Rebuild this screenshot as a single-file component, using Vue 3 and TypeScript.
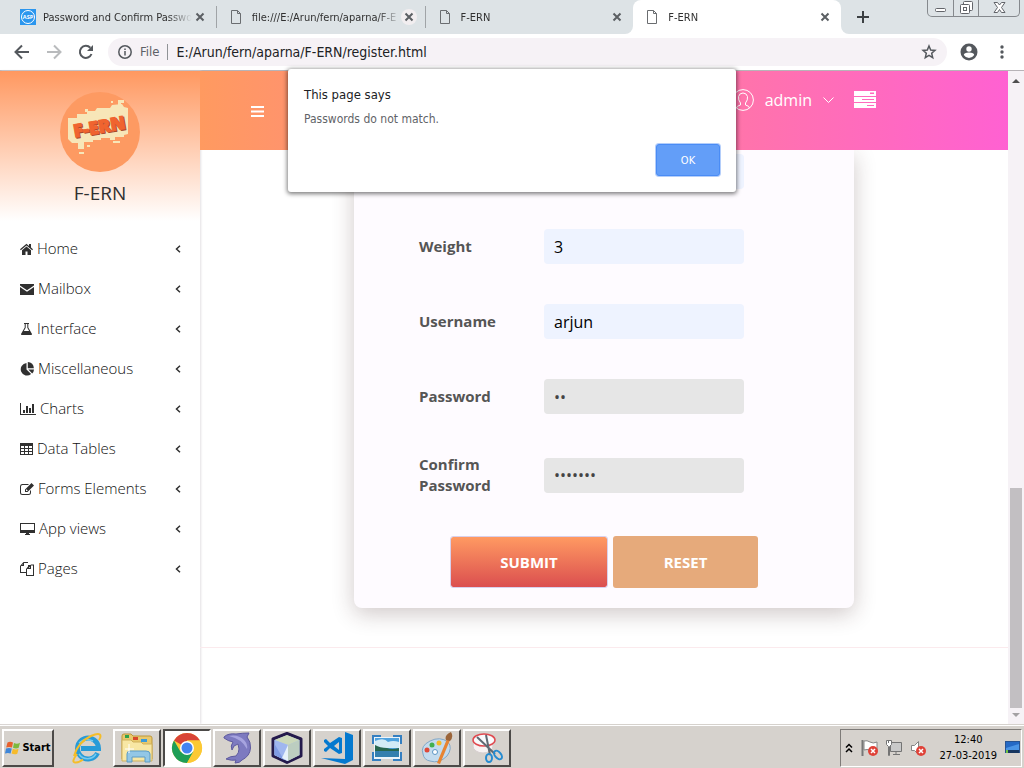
<script setup lang="ts">
import { ref } from 'vue'

interface Tab {
  title: string
  active?: boolean
  asp?: boolean
  hovered?: boolean
}

interface NavItem {
  label: string
  width: number
  path: string
}

const tabs: Tab[] = [
  { title: 'Password and Confirm Passwo', asp: true },
  { title: 'file:///E:/Arun/fern/aparna/F-E', hovered: true },
  { title: 'F-ERN' },
  { title: 'F-ERN', active: true },
]

// Every icon path is drawn on a grid 14 units high.
const nav: NavItem[] = [
  { label: 'Home', width: 13, path: 'M6.5 1.8 0 7.2l.8 1 5.7-4.8 5.7 4.8.8-1-2-1.700V2H9v1.900zM6.500 4.400 2 8.200V13h3.500V9.500h2V13H11V8.200z' },
  { label: 'Mailbox', width: 14, path: 'M0 2h14v1.500L7 8.300 0 3.500zM0 5l7 4.800L14 5v8H0z' },
  { label: 'Interface', width: 13, path: 'M4 1h5v1h-.700v3.500L12 12q.3 1-1 1H2q-1.300 0-1-1l3.700-6.500V2H4zM5.700 2v3.800L3.900 9h5.200L7.300 5.800V2z' },
  { label: 'Miscellaneous', width: 14, path: 'M6.500 1v6.500l4.600 4.600A6.300 6.300 0 1 1 6.500 1zM7.800 0A6 6 0 0 1 13.800 6.300H7.800zM8.300 7.500H14a6 6 0 0 1-1.800 4z' },
  { label: 'Charts', width: 16, path: 'M0 1h1v11h15v1H0zM3 8h2v3H3zM6 4h2v7H6zM9 6h2v5H9zM12 2h2v9h-2z' },
  { label: 'Data Tables', width: 13, path: 'M0 1h13v12H0zM1 4v2h3V4zM5 4v2h3V4zM9 4v2h3V4zM1 7v2h3V7zM5 7v2h3V7zM9 7v2h3V7zM1 10v2h3v-2zM5 10v2h3v-2zM9 10v2h3v-2z' },
  { label: 'Forms Elements', width: 14, path: 'M2 2h7L8 3H2.500Q1 3 1 4.500v6Q1 12 2.500 12h6q1.500 0 1.500-1.500V9l1-1v2.500Q11 13 8.500 13h-6Q0 13 0 10.500v-6Q0 2 2 2zM11.500 1 14 3.500 7.500 10H5V7.500zM6 7.900V9h1.100l.6-.6-1.100-1.100z' },
  { label: 'App views', width: 15, path: 'M0 1h15v10H9v1h1v1H5v-1h1v-1H0zM1 2v6h13V2z' },
  { label: 'Pages', width: 14, path: 'M3.500 0H8v3h2.500L11 2.500h3V14H6v-3H0V4zM7 1H4v3H1v6h5V7l2-2.500V1zM3 2.200 2.200 3H3zM13 3.500h-2V7H7v6h6zM10 4.800 8.800 6H10z' },
]

const height = ref('5')
const weight = ref('3')
const username = ref('arjun')
const password = ref('ab')
const confirmPassword = ref('abcdefg')
</script>

<template>
  <div class="desktop">
    <header class="tabstrip">
      <div class="tabs">
        <div v-for="(tab, i) in tabs" :key="i" class="tab" :class="{ active: tab.active }">
          <svg v-if="tab.asp" class="favicon" viewBox="0 0 16 16" width="16" height="16">
            <rect width="16" height="16" fill="#2b96ee" />
            <circle cx="8" cy="8" r="6.500" fill="none" stroke="#fff" />
            <text x="8" y="10" text-anchor="middle" font-size="5.500" font-weight="bold" fill="#fff">ASP</text>
          </svg>
          <svg v-else class="favicon" viewBox="0 0 16 16" width="16" height="16" fill="none" stroke="#6a6d70">
            <path d="M2.500 1.500h6l3 3v10h-9zM8.500 1.500v3h3" />
          </svg>
          <span class="tab-title">{{ tab.title }}</span>
          <button class="tab-close" :class="{ hovered: tab.hovered }" aria-label="Close tab">
            <svg viewBox="0 0 16 16" width="16" height="16" stroke="#5b5f63" stroke-width="2"><path d="M4.500 4.500l7 7M11.500 4.500l-7 7" /></svg>
          </button>
        </div>
      </div>
      <div class="strip-end">
        <button class="new-tab" aria-label="New tab">
          <svg viewBox="0 0 12 12" width="12" height="12" stroke="#3c4043" stroke-width="2"><path d="M6 0v12M0 6h12" /></svg>
        </button>
        <div class="window-controls">
          <button aria-label="Minimize"><svg width="13" height="14" viewBox="0 0 13 14" fill="#fff" stroke="#62656a"><rect x="1.500" y="8.500" width="10" height="3" rx="1" /></svg></button>
          <button aria-label="Restore"><svg width="13" height="14" viewBox="0 0 13 14" fill="#fff" stroke="#62656a"><rect x="3.500" y="1.500" width="9" height="9" rx="1" /><rect x=".5" y="4.500" width="9" height="9" rx="1" /><rect x="3.500" y="7.500" width="3" height="3" /></svg></button>
          <button class="wide" aria-label="Close"><svg width="13" height="14" viewBox="0 0 13 14" fill="#fff" stroke="#62656a"><path d="M1 2.500h3.500l2 2.500 2-2.500H12L8.500 7.500l3.500 5H8.500l-2-3-2 3H1l3.500-5z" /></svg></button>
        </div>
      </div>
    </header>

    <div class="toolbar">
      <button aria-label="Back"><svg width="16" height="16" viewBox="0 0 16 16" fill="none" stroke="#54585d" stroke-width="2"><path d="M15 8H2M8 1.500 1.500 8 8 14.500" /></svg></button>
      <button aria-label="Forward"><svg width="16" height="16" viewBox="0 0 16 16" fill="none" stroke="#b9bbbd" stroke-width="2"><path d="M1 8h13M8 1.500 14.500 8 8 14.500" /></svg></button>
      <button aria-label="Reload"><svg width="16" height="16" viewBox="0 0 16 16" fill="none" stroke="#54585d" stroke-width="2"><path d="M13.500 10A6 6 0 1 1 12.300 3.800" /><path d="M15 1v6H9z" fill="#54585d" stroke="none" /></svg></button>
      <div class="omnibox">
        <svg width="14" height="14" viewBox="0 0 14 14" fill="none" stroke="#54585d" stroke-width="1.500"><circle cx="7" cy="7" r="6.200" /><path d="M7 6v4.500M7 3.500V5" /></svg>
        <span class="scheme">File</span>
        <input class="url" aria-label="Address" value="E:/Arun/fern/aparna/F-ERN/register.html" />
        <button aria-label="Bookmark"><svg width="16" height="16" viewBox="0 0 16 16" fill="none" stroke="#54585d" stroke-width="1.500"><path d="M8 2l1.700 4 4.300.4-3.300 2.900 1 4.300L8 11.300l-3.700 2.300 1-4.300L2 6.400 6.300 6z" /></svg></button>
      </div>
      <button aria-label="Profile"><svg width="18" height="18" viewBox="0 0 18 18"><circle cx="9" cy="9" r="8.500" fill="#54585d" /><circle cx="9" cy="6" r="2.700" fill="#fff" /><path d="M3.800 12q0-2.500 5.200-2.500t5.200 2.500q-2 3-5.200 3t-5.200-3z" fill="#fff" /></svg></button>
      <button aria-label="Menu"><svg width="16" height="16" viewBox="0 0 16 16" fill="#54585d"><circle cx="8" cy="3" r="1.700" /><circle cx="8" cy="8" r="1.700" /><circle cx="8" cy="13" r="1.700" /></svg></button>
    </div>

    <div class="viewport">
      <aside class="sidebar">
        <div class="brand">
          <svg class="logo" viewBox="0 0 80 80" width="80" height="80">
            <circle cx="40" cy="40" r="40" fill="#fd9a62" />
            <path fill="#f7e6b8" d="M8 26h9v-4h10v-3h8l2-3h13l2-3 10-1 2 3 4 1v26l-4 1v2h-9v3h-5v-2h-9v2h-8v2H24v7h-6v-6h-6l-4-4z" />
            <path fill="#f7e6b8" d="M51 9h2v2h-2zM58 8h6v3h-3v3h-3zM25 17h3v3h-3zM27 53h3v2h-3zM19 60h5v2h-5zM53 49h7v2h-7z" />
            <g transform="rotate(-10 40 35)" font-family="Open Sans, sans-serif" font-size="18" font-weight="800">
              <text x="14" y="42" fill="#a8482a" stroke="#a8482a">F-ERN</text>
              <text x="13" y="41" fill="#f0642f" stroke="#f0642f">F-ERN</text>
            </g>
          </svg>
          <h1>F-ERN</h1>
        </div>
        <nav>
          <a v-for="item in nav" :key="item.label" href="#">
            <svg :width="item.width" height="14" :viewBox="`0 0 ${item.width} 14`"><path :d="item.path" fill="#303030" fill-rule="evenodd" /></svg>
            <span>{{ item.label }}</span>
            <svg class="chevron" width="6" height="8" viewBox="0 0 6 8" fill="none" stroke="#303030" stroke-width="1.500"><path d="M5 .7 1.500 4 5 7.300" /></svg>
          </a>
        </nav>
      </aside>

      <main>
        <div class="topbar">
          <button class="burger" aria-label="Toggle navigation">
            <svg width="13" height="11" viewBox="0 0 13 11" fill="#fff"><path d="M0 0h13v2H0zM0 4.500h13v2H0zM0 9h13v2H0z" /></svg>
          </button>
          <button class="account">
            <svg width="22" height="22" viewBox="0 0 22 22" fill="none" stroke="#fff"><circle cx="11" cy="11" r="10.400" /><path d="M4.500 19q0-2 4-3v-2Q6 11 6.500 7.500 7.500 4 11 4t4.500 3.500Q16 11 13.500 14v2q4 1 4 3" /></svg>
            <span>admin</span>
            <svg width="11" height="6" viewBox="0 0 11 6" fill="none" stroke="#fff"><path d="M.5.5l5 5 5-5" /></svg>
          </button>
          <button class="tasks" aria-label="Tasks">
            <svg width="22" height="17" viewBox="0 0 22 17" fill="#fff" fill-rule="evenodd"><path d="M0 0h22v5H0zM16 1.500v1.500h4V1.500zM0 6h22v5H0zM8 8v1h12V8zM0 12h22v5H0zM13 14v1h7v-1z" /></svg>
          </button>
        </div>

        <form class="card" @submit.prevent>
          <div class="row"><label for="height">Height</label><input id="height" v-model="height" class="filled" type="text" /></div>
          <div class="row"><label for="weight">Weight</label><input id="weight" v-model="weight" class="filled" type="text" /></div>
          <div class="row"><label for="username">Username</label><input id="username" v-model="username" class="filled" type="text" /></div>
          <div class="row"><label for="password">Password</label><input id="password" v-model="password" type="password" /></div>
          <div class="row"><label for="confirm">Confirm Password</label><input id="confirm" v-model="confirmPassword" type="password" /></div>
          <div class="actions">
            <button class="submit" type="submit">SUBMIT</button>
            <button class="reset" type="button">RESET</button>
          </div>
        </form>
        <footer></footer>
      </main>

      <div class="scrollbar">
        <svg width="8" height="4" viewBox="0 0 8 4"><path d="M4 0l4 4H0z" fill="#4f4f4f" /></svg>
        <div class="track"><div class="thumb"></div></div>
        <svg width="8" height="4" viewBox="0 0 8 4"><path d="M4 4l4-4H0z" fill="#a3a1a3" /></svg>
      </div>

      <div class="dialog" role="alertdialog" aria-labelledby="dialog-title" aria-describedby="dialog-text">
        <h2 id="dialog-title">This page says</h2>
        <p id="dialog-text">Passwords do not match.</p>
        <button>OK</button>
      </div>
    </div>

    <div class="taskbar">
      <button class="start">
        <svg width="16" height="16" viewBox="0 0 16 16">
          <path d="M2.500 2.500Q5 1 8 2.500L7 7.500Q4 6.500 1.200 7.500z" fill="#e8602c" />
          <path d="M9 3q3 1.500 6-.2l-1.300 5Q11 9 8 7.700z" fill="#7db93c" />
          <path d="M1 8.500q3-1 5.800 0l-1.200 5Q3 12.500 0 13.500z" fill="#3f86d8" />
          <path d="M7.800 8.800q3 1.200 5.800 0l-1.300 5q-3 1.200-5.700-.2z" fill="#f6bb2c" />
        </svg>
        Start
      </button>
      <button class="app plain" aria-label="Internet Explorer">
        <svg width="32" height="32" viewBox="0 0 32 32" fill="none">
          <path d="M26.500 21A10.500 10.500 0 1 1 27.500 16.500H10" stroke="#279bd8" stroke-width="5" />
          <path d="M25 22A10 10 0 0 1 8 22M8 11Q14 5 22 9" stroke="#74cbf0" stroke-width="1.500" />
          <path d="M6 22Q0 30 4 30.500q3 .5 8-3M3 24Q7 10 20 4q9-4 9.500 0 0 2-1.500 4" stroke="#f5bd28" stroke-width="2" />
        </svg>
      </button>
      <button class="app" aria-label="File Explorer">
        <svg width="32" height="32" viewBox="0 0 32 32">
          <path d="M1 4q0-2 2-2h7l2 2h17q2 0 2 2v21H1z" fill="#e9c96d" stroke="#bd973b" />
          <path d="M4 3h4v3H4z" fill="#2fa24b" /><path d="M12 5h5v3h-5z" fill="#d9472b" /><path d="M20 7h6v3h-6z" fill="#3a9bd9" />
          <path d="M1 8h9l2 2h8l2 2h9v17H1z" fill="#f8e7a4" stroke="#cfb15c" />
          <path d="M6 30V22q0-3 3-3h16q4 0 4 3v8h-5v-5H11v5z" fill="#93c7e6" stroke="#5c9cc5" />
          <path d="M8 12v9M4 17h9" stroke="#fff" />
        </svg>
      </button>
      <button class="app current" aria-label="Google Chrome">
        <svg width="32" height="32" viewBox="0 0 32 32">
          <circle cx="16" cy="16" r="15" fill="#fcc934" />
          <path d="M16 16 3 8.500A15 15 0 0 1 29 8.500H16z" fill="#d94437" />
          <path d="M3 8.500A15 15 0 0 0 16 31l6.500-11.500L16 16l-6.500 3.700z" fill="#1e9e57" />
          <path d="M16 8.500h13A15 15 0 0 1 16 31l6.500-11.500z" fill="#fcc934" />
          <circle cx="16" cy="16" r="7" fill="#fff" /><circle cx="16" cy="16" r="5.500" fill="#4384f2" />
        </svg>
      </button>
      <button class="app" aria-label="MySQL Workbench">
        <svg width="32" height="32" viewBox="0 0 32 32" stroke-linejoin="round">
          <path d="M3 5Q7 1 15 2q7-1 13-1l-2 4q4 5 3.500 11-.5 8-8.500 12-2 3-7 3l1-3q-4 1-10-1 4-3 10-3 3-3 3-7l-1-5-4 2-2 4q-2-4 1-8-5-1-9-4z" fill="#7d7ac0" stroke="#5e5a9e" />
          <path d="M8 4q9-2 15 4 4 4 3 9Q21 7 8 4z" fill="#a7a4df" />
        </svg>
      </button>
      <button class="app" aria-label="NetBeans">
        <svg width="32" height="32" viewBox="0 0 32 32" stroke-linejoin="round">
          <path d="M16 1.500 30 7v17L16 30.500 2 24V7z" fill="#b2c6ea" stroke="#241a4c" stroke-width="3" />
          <path d="M16 3 28.500 8 17 13 3.500 8z" fill="#cbd8ba" />
          <path d="M3.500 8 17 13v16L3.500 23z" fill="#9fb6ef" />
          <path d="M28.500 8 17 13v16l11.500-6z" fill="#bccdc0" />
          <path d="M3.500 12 13 28 3.500 23z" fill="#7f9be4" />
          <path d="M17 13v16l-6-3z" fill="#e6f1fa" />
        </svg>
      </button>
      <button class="app" aria-label="Visual Studio Code">
        <svg width="32" height="32" viewBox="0 0 32 32" fill="#0479cf">
          <path d="M24 0l8 3v25l-8 4-24-6 24 1z" />
          <path fill-rule="evenodd" d="M18 5l3 1v15l-3 1-9-6-4 4-2-1v-2l4-3-4-4v-2l2-1 4 4zM18 10l-5 4 5 4z" />
        </svg>
      </button>
      <button class="app" aria-label="Photo viewer">
        <svg width="32" height="32" viewBox="0 0 32 32">
          <path d="M1 3h9v3H4v6H1zM31 3h-9v3h6v6h3zM1 29h9v-3H4v-6H1zM31 29h-9v-3h6v-6h3z" fill="#357fc1" />
          <path d="M3 5h26v22H3z" fill="#edf4fa" /><path d="M4 6h24v19H4z" fill="#4fa2df" />
          <path d="M4 9q9-4 13 1 5-2 11 0v6H4z" fill="#d3ebf7" /><path d="M4 13q5 3 12 3 5 2 12 0v3H4z" fill="#27664f" /><path d="M4 19h24v6H4z" fill="#347fae" />
        </svg>
      </button>
      <button class="app" aria-label="Paint">
        <svg width="32" height="32" viewBox="0 0 32 32">
          <path d="M2 22Q-1 14 9 9t18 1q5 6-1 14-8 8-17 5-6-1-7-7z" fill="#c3dbee" stroke="#81a7c7" />
          <circle cx="6" cy="18" r="2.500" fill="#df4939" /><circle cx="11" cy="13" r="2.500" fill="#41af4d" /><circle cx="18" cy="11" r="2.500" fill="#f5bb28" /><circle cx="14" cy="20" r="2.500" fill="#fff" stroke="#5d97c5" />
          <path d="M26 7l3 1-10 24-3-1z" fill="#e78432" /><path d="M25 8q-2-5 5-8 3 5-1 9z" fill="#9b653a" />
        </svg>
      </button>
      <button class="app" aria-label="Snipping Tool">
        <svg width="32" height="32" viewBox="0 0 32 32" fill="none">
          <ellipse cx="12" cy="14" rx="10" ry="7" fill="#f7f2f2" stroke="#d7cfd0" />
          <ellipse cx="13" cy="8" rx="11" ry="6" fill="#f9fafc" stroke="#e04a50" stroke-width="1.500" />
          <path d="M6 5l18 17M15 3l4 20" stroke="#5f6972" stroke-width="2" />
          <ellipse cx="18" cy="26" rx="3" ry="4" stroke="#268bd0" stroke-width="2" /><ellipse cx="27" cy="23" rx="3" ry="5" stroke="#268bd0" stroke-width="2" transform="rotate(-40 27 23)" />
        </svg>
      </button>
      <div class="tray">
        <svg width="8" height="10" viewBox="0 0 8 10" fill="none" stroke="#000" stroke-width="1.500"><path d="M1 4.500l3-3 3 3M1 9l3-3 3 3" /></svg>
        <div class="tray-icons">
          <svg width="18" height="18" viewBox="0 0 18 18"><path d="M1.500 1v16" stroke="#777" stroke-width="2" /><path d="M3 2q3-1 6 1t7 0v8q-4 1-7 0t-6 0z" fill="#fff" stroke="#858585" /><circle cx="12" cy="12" r="5" fill="#df4238" /><path d="M10 10l4 4M14 10l-4 4" stroke="#fff" stroke-width="1.500" /></svg>
          <svg width="18" height="18" viewBox="0 0 18 18" fill="#fff" stroke="#747474"><path d="M5.500 3.500h11v9h-11z" fill="#c9c9c9" /><path d="M8 15.500h7M11 13v2" /><path d="M1.500 1.500h5v4l-2 2v9h-1v-9l-2-2z" /><path d="M3.500 1v3" /></svg>
          <svg width="18" height="18" viewBox="0 0 18 18"><path d="M2.500 6.500h3l4-4v13l-4-4h-3z" fill="#fff" stroke="#858585" /><circle cx="12" cy="12" r="5" fill="#df4238" /><path d="M10 10l4 4M14 10l-4 4" stroke="#fff" stroke-width="1.500" /></svg>
        </div>
        <div class="clock"><time>12:40</time><time>27-03-2019</time></div>
        <svg width="15" height="13" viewBox="0 0 15 13"><rect x=".5" y=".5" width="14" height="11" fill="#2569c5" stroke="#285391" /><path d="M1 7l13-4v6H1z" fill="#4b95e6" /><path d="M1 9h13v3H1z" fill="#17365f" /><path d="M1 9h2v3H1z" fill="#6fc344" /></svg>
      </div>
    </div>
  </div>
</template>

<style>
body {
  margin: 0;
}
</style>

<style scoped>
.desktop {
  display: flex;
  flex-direction: column;
  height: 100vh;
  overflow: hidden;
  background: #fff;
  font-family: "Open Sans", "Noto Sans", sans-serif;
  color: #303030;
}
.desktop * {
  box-sizing: border-box;
}
button {
  padding: 0;
  border: 0;
  background: none;
  font: inherit;
  color: inherit;
}
svg {
  display: block;
  flex: none;
}

/* Browser chrome */
.tabstrip {
  display: flex;
  flex: none;
  height: 34px;
  background: linear-gradient(#dde3e6 50%, #fff 50%);
  font-family: "DejaVu Sans Condensed", "DejaVu Sans", sans-serif;
  font-size: 11px;
}
.tabs {
  display: flex;
  width: 841px;
}
.tab {
  display: flex;
  flex: 1;
  align-items: center;
  min-width: 0;
  padding: 0 8px 0 12px;
  background: #dde3e6;
}
.tab:first-child {
  flex: 1 0 8px;
  padding-left: 20px;
}
.tab:first-child,
.tab:nth-child(2) {
  border-image: linear-gradient(transparent 7px, #a0a4a7 7px, #a0a4a7 27px, transparent 27px) 1;
  border-right: 1px solid;
}
.tab:nth-child(3) {
  border-radius: 0 0 8px 0;
}
.tab.active {
  border-radius: 8px 8px 0 0;
  background: #fff;
}
.favicon {
  margin-right: 7px;
  font-family: "Open Sans", sans-serif;
}
.tab-title {
  flex: 1;
  overflow: hidden;
  white-space: nowrap;
  mask-image: linear-gradient(to left, transparent, #000 24px);
}
.tab-close {
  width: 16px;
  height: 16px;
  border-radius: 8px;
}
.tab-close.hovered {
  background: #f2eef0;
}
.strip-end {
  display: flex;
  flex: 1;
  border-radius: 0 0 0 8px;
  background: #dde3e6;
}
.new-tab {
  padding: 0 16px;
}
.window-controls {
  display: flex;
  height: 17px;
  margin-left: auto;
  margin-right: 4px;
  border: 1px solid #85898d;
  border-top: 0;
  border-radius: 0 0 5px 5px;
}
.window-controls button {
  display: flex;
  justify-content: center;
  width: 25px;
}
.window-controls button + button {
  border-left: 1px solid #85898d;
}
.window-controls .wide {
  width: 41px;
}
.toolbar {
  display: flex;
  flex: none;
  align-items: center;
  gap: 16px;
  height: 37px;
  padding: 0 14px;
  border-bottom: 1px solid #b7b3b7;
  font-family: "DejaVu Sans Condensed", "DejaVu Sans", sans-serif;
  font-size: 14px;
}
.omnibox {
  display: flex;
  flex: 1;
  align-items: center;
  height: 28px;
  margin: 0 -3px 0 -2px;
  padding: 0 10px;
  border-radius: 14px;
  background: #f6f2f6;
}
.scheme {
  margin-left: 8px;
  padding-right: 8px;
  border-right: 1px solid #909396;
  color: #5c6066;
  font-size: 13px;
  line-height: 16px;
}
.url {
  flex: 1;
  padding: 0 8px;
  border: 0;
  background: none;
  font: inherit;
  color: #202124;
  outline: 0;
}

/* Page */
.viewport {
  display: flex;
  flex: 1;
  min-height: 0;
  position: relative;
}
.sidebar {
  flex: none;
  width: 200px;
  box-shadow: 1px 0 2px #e4e0e4;
}
.brand {
  display: flex;
  flex-direction: column;
  align-items: center;
  height: 150px;
  padding-top: 21px;
  background: linear-gradient(#ff9860, #fff);
}
h1 {
  margin: 6px 0 0;
  font-size: 19px;
  font-weight: 400;
  line-height: 30px;
}
nav {
  padding-top: 8px;
}
nav a {
  display: flex;
  align-items: center;
  gap: 4px;
  height: 40px;
  padding: 0 19px 0 20px;
  color: #111;
  font-size: 15px;
  font-weight: 300;
  line-height: 20px;
  text-decoration: none;
}
nav span {
  padding-bottom: 2px;
}
.chevron {
  margin-left: auto;
}
main {
  flex: 1;
  overflow: hidden;
}
.topbar {
  display: flex;
  align-items: flex-start;
  height: 79px;
  padding: 18px 132px 0 51px;
  position: relative;
  z-index: 1;
  background: linear-gradient(to right, #ff9a60, #ff74aa 66%, #ff61d2);
  color: #fff;
}
.burger {
  margin-top: 17px;
}
.account {
  display: flex;
  align-items: center;
  gap: 11px;
  margin-left: auto;
  font-size: 16px;
  line-height: 22px;
}
.tasks {
  margin: 2px 0 0 20px;
}
.card {
  width: 500px;
  margin: 0 auto;
  padding: 4px 65px 20px;
  border-radius: 0 0 8px 8px;
  background: #fefbff;
  box-shadow: 0 6px 22px rgba(60, 30, 30, 0.24);
}
.row {
  display: flex;
  align-items: center;
  margin-bottom: 40px;
}
.row label {
  width: 125px;
  padding-right: 20px;
  color: #555;
  font-size: 15px;
  font-weight: 700;
  line-height: 21px;
}
.row input {
  width: 200px;
  height: 35px;
  padding: 0 10px;
  border: 0;
  border-radius: 4px;
  background: #e6e6e6;
  font-family: inherit;
  font-size: 16px;
  color: #444;
}
.row input.filled {
  background: #eef3ff;
  color: #000;
}
.actions {
  display: flex;
  justify-content: center;
  gap: 5px;
}
.actions button {
  height: 52px;
  border-radius: 3px;
  color: #fff;
  font-size: 15px;
  font-weight: 700;
}
.actions .submit {
  width: 158px;
  border: 1px solid #d8d0ec;
  background: linear-gradient(#ff9a62, #db4f4f) padding-box;
}
.actions .reset {
  width: 145px;
  background: #e6aa7b;
}
footer {
  margin-top: 39px;
  border-top: 1px solid #fbeaed;
}
.scrollbar {
  display: flex;
  flex: none;
  flex-direction: column;
  align-items: center;
  width: 16px;
  padding: 8px 0 7px;
  background: #f6f2f6;
}
.track {
  display: flex;
  flex: 1;
  align-items: flex-end;
  width: 12px;
}
.thumb {
  width: 12px;
  height: 35%;
  margin-bottom: 5px;
  background: #c2bfc2;
}
.dialog {
  display: flex;
  flex-direction: column;
  width: 448px;
  padding: 16px;
  position: absolute;
  top: -2px;
  left: calc(50% - 224px);
  z-index: 2;
  border-radius: 3px;
  background: #fff;
  box-shadow: 0 1px 4px 1px rgba(0, 0, 0, 0.5);
  font-family: "DejaVu Sans Condensed", "DejaVu Sans", sans-serif;
}
.dialog h2 {
  margin: 0;
  color: #202124;
  font-size: 13px;
  font-weight: 400;
  line-height: 20px;
}
.dialog p {
  margin: 4px 0 15px;
  color: #5f6368;
  font-size: 12px;
  line-height: 20px;
}
.dialog button {
  align-self: flex-end;
  width: 64px;
  height: 32px;
  border: 1px solid #4a8cf5;
  border-radius: 3px;
  background: #639ef8;
  box-shadow: 0 0 0 1px #b4cefa;
  color: #fff;
  font-size: 11px;
}

/* Taskbar */
.taskbar {
  display: flex;
  flex: none;
  align-items: center;
  gap: 2px;
  height: 44px;
  padding: 2px 2px 0;
  border-top: 1px solid #d6d2cd;
  background: #d6d2cd;
  box-shadow: inset 0 1px #fff;
}
.start,
.app {
  display: flex;
  align-items: center;
  justify-content: center;
  height: 38px;
  border: 2px solid;
  border-color: #fff #4c4a48 #4c4a48 #fff;
}
.start {
  gap: 1px;
  width: 52px;
  margin-right: 7px;
  color: #000;
  font-family: "DejaVu Sans Condensed", "DejaVu Sans", sans-serif;
  font-size: 11px;
  font-weight: 700;
}
.app {
  width: 48px;
}
.app.plain {
  border-color: transparent;
}
.app.current {
  border-color: #4c4a48 #fff #fff #4c4a48;
  background: #fff;
}
.tray {
  display: flex;
  align-items: center;
  gap: 8px;
  height: 38px;
  margin-left: auto;
  padding: 0 1px 0 4px;
  border: 1px solid;
  border-color: #7e7b78 #fff #fff #7e7b78;
}
.tray-icons {
  display: flex;
  gap: 6px;
}
.clock {
  display: flex;
  flex-direction: column;
  align-items: center;
  margin-left: 4px;
  color: #000;
  font-family: "DejaVu Sans Condensed", "DejaVu Sans", sans-serif;
  font-size: 11px;
  line-height: 16px;
}
</style>
